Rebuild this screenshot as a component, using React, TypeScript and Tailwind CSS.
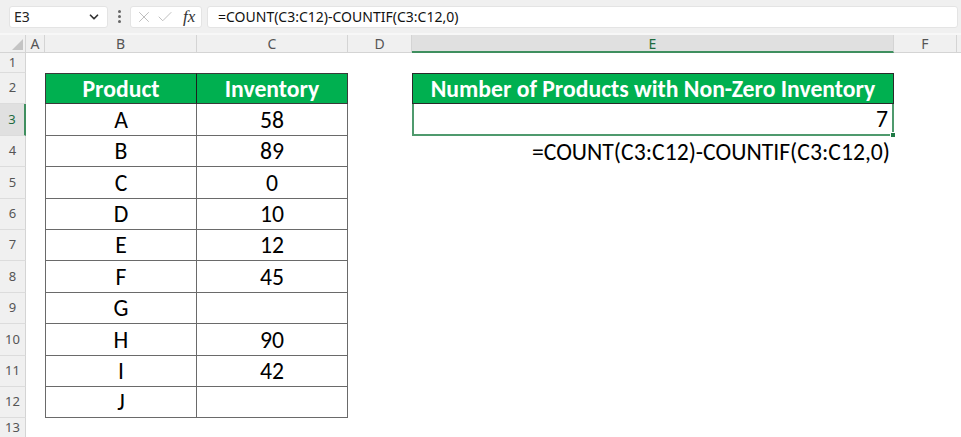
import { ChevronDown, X, Check } from "lucide-react";

type Col = { key: string; label: string; w: string };

const COLS: Col[] = [
  { key: "A", label: "A", w: "w-[19px]" },
  { key: "B", label: "B", w: "w-[152px]" },
  { key: "C", label: "C", w: "w-[151px]" },
  { key: "D", label: "D", w: "w-[64px]" },
  { key: "E", label: "E", w: "w-[482px]" },
  { key: "F", label: "F", w: "w-[63px]" },
  { key: "G", label: "", w: "w-[120px]" },
];

const DATA: [string, string][] = [
  ["A", "58"],
  ["B", "89"],
  ["C", "0"],
  ["D", "10"],
  ["E", "12"],
  ["F", "45"],
  ["G", ""],
  ["H", "90"],
  ["I", "42"],
  ["J", ""],
];

const ROW_H = [
  "h-[20px]",
  "h-[31px]",
  "h-[32px]",
  "h-[31px]",
  "h-[32px]",
  "h-[31px]",
  "h-[31px]",
  "h-[32px]",
  "h-[31px]",
  "h-[32px]",
  "h-[31px]",
  "h-[31px]",
  "h-[20px]",
];

const cellFont = "font-['Carlito','Lato',sans-serif] text-[23.7px] text-black";
const uiFont = "font-['Noto_Sans','Liberation_Sans',sans-serif]";

function FormulaBar() {
  return (
    <div className={`flex items-center h-[33px] bg-[#f0f0f0] ${uiFont}`}>
      <div className="ml-[9px] w-[99px] h-[22px] bg-white rounded-[3px] border border-[#e4e4e4] flex items-center justify-between pl-[4px] pr-[6px]">
        <span className="text-[14px] text-[#222]">E3</span>
        <ChevronDown size={14} strokeWidth={3} className="text-[#333]" />
      </div>
      <div className="w-[22px] flex flex-col items-center gap-[2px]">
        <span className="w-[3px] h-[3px] rounded-full bg-[#666]" />
        <span className="w-[3px] h-[3px] rounded-full bg-[#666]" />
        <span className="w-[3px] h-[3px] rounded-full bg-[#666]" />
      </div>
      <div className="w-[72px] h-[22px] bg-white rounded-[3px] border border-[#e4e4e4] flex items-center pl-[4px] gap-[3px]">
        <X size={18} strokeWidth={1.2} className="text-[#b8b8b8]" />
        <Check size={18} strokeWidth={1.2} className="text-[#b8b8b8]" />
        <span className="ml-[6px] font-['Liberation_Serif',serif] italic text-[17px] text-[#333] leading-none">
          fx
        </span>
      </div>
      <div className="ml-[5px] flex-1 mr-[3px] h-[22px] bg-white rounded-[3px] border border-[#e4e4e4] flex items-center pl-[10px]">
        <span className="text-[14px] text-[#111]">=COUNT(C3:C12)-COUNTIF(C3:C12,0)</span>
      </div>
    </div>
  );
}

function ColumnHeaders() {
  return (
    <div className={`flex h-[20px] bg-[#f0f0f0] border-t-2 border-[#f7f7f7] ${uiFont}`}>
      <div className="relative w-[26px] shrink-0 border-r border-b border-[#d4d4d4]">
        <div className="absolute right-[2px] bottom-[2px] w-0 h-0 border-l-[11px] border-l-transparent border-b-[11px] border-b-[#c4c4c4]" />
      </div>
      {COLS.map((c) => (
        <div
          key={c.key}
          className={`${c.w} shrink-0 flex items-center justify-center text-[14px] border-r ${
            c.key === "E"
              ? "bg-[#e0e0e0] text-[#1d6b3f] border-b-2 border-b-[#3f8f5f] border-r-[#d4d4d4]"
              : "text-[#555] border-b border-[#d4d4d4]"
          }`}
        >
          {c.label}
        </div>
      ))}
    </div>
  );
}

function RowHeader({ n, h }: { n: number; h: string }) {
  const sel = n === 3;
  return (
    <div
      className={`${h} w-[26px] shrink-0 flex items-center justify-center text-[13px] border-b border-[#dcdcdc] ${uiFont} ${
        sel
          ? "bg-[#e0e0e0] text-[#1d6b3f] border-r-2 border-r-[#3f8f5f]"
          : "bg-[#f0f0f0] text-[#555] border-r border-r-[#d4d4d4]"
      }`}
    >
      {n}
    </div>
  );
}

function Row({ n }: { n: number }) {
  const h = ROW_H[n - 1];
  const isHeader = n === 2;
  const item = n >= 3 && n <= 12 ? DATA[n - 3] : null;
  const inTable = n >= 2 && n <= 12;

  const tableCell = (extra: string) =>
    isHeader
      ? `${extra} bg-[#00b050] text-white font-bold border-t border-b border-[#3a3a3a]`
      : `${extra} bg-white border-b border-[#6a6a6a]`;

  return (
    <div className="flex">
      <RowHeader n={n} h={h} />
      <div className={`${h} w-[19px] shrink-0 bg-white`} />
      {inTable ? (
        <>
          <div
            className={`${h} w-[152px] shrink-0 flex items-center justify-center border-l border-r ${cellFont} ${tableCell(
              isHeader ? "border-l-[#3a3a3a] border-r-[#1e1e1e]" : "border-l-[#6a6a6a] border-r-[#6a6a6a]"
            )}`}
          >
            {isHeader ? "Product" : item?.[0]}
          </div>
          <div
            className={`${h} w-[151px] shrink-0 flex items-center justify-center border-r ${cellFont} ${tableCell(
              isHeader ? "border-r-[#3a3a3a]" : "border-r-[#6a6a6a]"
            )}`}
          >
            {isHeader ? "Inventory" : item?.[1]}
          </div>
        </>
      ) : (
        <>
          <div className={`${h} w-[152px] shrink-0 bg-white`} />
          <div className={`${h} w-[151px] shrink-0 bg-white`} />
        </>
      )}
      <div className={`${h} w-[64px] shrink-0 bg-white`} />
      {n === 2 ? (
        <div
          className={`${h} w-[482px] shrink-0 flex items-center justify-center bg-[#00b050] text-white font-bold border border-[#2a2a2a] ${cellFont}`}
        >
          Number of Products with Non-Zero Inventory
        </div>
      ) : n === 3 ? (
        <div
          className={`${h} relative w-[482px] shrink-0 flex items-center justify-end pr-[4px] bg-white border-2 border-t-0 border-[#4f9a6d] ${cellFont}`}
        >
          7
          <div className="absolute -right-[4px] -bottom-[4px] w-[6px] h-[6px] bg-[#1f7a45] border border-white" />
        </div>
      ) : n === 4 ? (
        <div
          className={`${h} w-[482px] shrink-0 flex items-center justify-end pr-[4px] bg-white ${cellFont}`}
        >
          =COUNT(C3:C12)-COUNTIF(C3:C12,0)
        </div>
      ) : (
        <div className={`${h} w-[482px] shrink-0 bg-white`} />
      )}
      <div className={`${h} flex-1 bg-white`} />
    </div>
  );
}

export default function App() {
  const rows = Array.from({ length: 13 }, (_, i) => i + 1);
  return (
    <div className="w-[961px] h-[437px] overflow-hidden bg-white">
      <FormulaBar />
      <ColumnHeaders />
      {rows.map((n) => (
        <Row key={n} n={n} />
      ))}
    </div>
  );
}
